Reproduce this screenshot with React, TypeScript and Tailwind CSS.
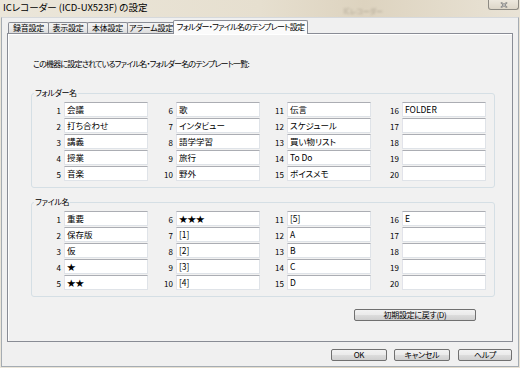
import React from 'react'

const font = "font-['Noto_Sans_CJK_JP',sans-serif] [font-feature-settings:'palt']"

const folderNames = ['会議', '打ち合わせ', '講義', '授業', '音楽', '歌', 'インタビュー', '語学学習', '旅行', '野外', '伝言', 'スケジュール', '買い物リスト', 'To Do', 'ボイスメモ', 'FOLDER', '', '', '', '']
const fileNames = ['重要', '保存版', '仮', '★', '★★', '★★★', '[1]', '[2]', '[3]', '[4]', '[5]', 'A', 'B', 'C', 'D', 'E', '', '', '', '']

// left margin of each of the 4 columns inside a group box
const colMargins = ['ml-[12px]', 'ml-[8px]', 'ml-[7px]', 'ml-[11px]']

function Field({ n, value }: { n: number; value: string }) {
  return (
    <div className="flex h-[15px] items-center">
      <span className="w-[20px] pr-[3px] pt-[2px] text-right text-[8px] leading-none text-black">{n}</span>
      <div className="h-[15px] w-[84px] border border-[#dfe3e8] border-t-[#abadb3] border-l-[#e2e3ea] bg-white pl-[2px] text-[8.5px] leading-[12px] text-black whitespace-nowrap overflow-hidden">
        {value}
      </div>
    </div>
  )
}

function Group({ label, items, className }: { label: string; items: string[]; className?: string }) {
  return (
    <fieldset className={`ml-[23px] w-[464px] rounded-[3px] border border-[#d5dfe5] pt-[3px] pb-[6px] ${className ?? ''}`}>
      <legend className="ml-[2px] px-[1px] text-[8px] leading-[12px] tracking-[-0.3px] text-black">{label}</legend>
      <div className="flex">
        {[0, 1, 2, 3].map(c => (
          <div key={c} className={`flex flex-col gap-[1px] ${colMargins[c]}`}>
            {items.slice(c * 5, c * 5 + 5).map((v, i) => (
              <Field key={i} n={c * 5 + i + 1} value={v} />
            ))}
          </div>
        ))}
      </div>
    </fieldset>
  )
}

function Btn({ children, className }: { children: React.ReactNode; className?: string }) {
  return (
    <div className={`flex h-[12px] items-center justify-center rounded-[2px] border border-[#707070] bg-[linear-gradient(#f2f2f2,#ebebeb_45%,#dddddd_50%,#cfcfcf)] text-[8px] leading-none tracking-[-0.3px] text-black ${className ?? ''}`}>
      {children}
    </div>
  )
}

const tabs = [
  { label: '録音設定', w: 'w-[41px]' },
  { label: '表示設定', w: 'w-[40px]' },
  { label: '本体設定', w: 'w-[41px]' },
  { label: 'アラーム設定', w: 'w-[48px]' },
]

export default function App() {
  return (
    <div className={`h-[368px] w-[520px] overflow-hidden bg-[linear-gradient(90deg,#ebe6da,#e6dfcf_50%,#ddd3bf_70%,#e9e3d6)] ${font}`}>
      {/* title bar */}
      <div className="flex h-[17px] items-start">
        <span className="ml-[3px] mt-[1px] text-[9.5px] leading-[12px] text-black">ICレコーダー (ICD-UX523F) の設定</span>
        <span className="ml-[196px] mt-[8px] text-[7px] leading-none text-[#8a8070] opacity-60 blur-[1px]">ICレコーダー</span>
        <div className="ml-auto mr-[1px] flex h-[10px] w-[31px] items-center justify-center rounded-b-[3px] border border-t-0 border-[#8d8a83] bg-[linear-gradient(#ede8de,#ddd6c8)]">
          <svg width="8" height="6" viewBox="0 0 8 6">
            <path d="M1 0.5 L7 5.5 M7 0.5 L1 5.5" stroke="#5a5a5a" strokeWidth="1.6" />
            <path d="M1 0.5 L7 5.5 M7 0.5 L1 5.5" stroke="#ffffff" strokeWidth="0.6" />
          </svg>
        </div>
      </div>

      {/* client area */}
      <div className="ml-[1px] flex h-[350px] w-[518px] flex-col border border-[#a5acb3] border-t-[#d6d9dc] bg-[#f0f0f0]">
        {/* tab strip */}
        <div className="ml-[5px] mt-[2px] flex h-[13px] items-end pl-[1px]">
          {tabs.map((t, i) => (
            <div
              key={t.label}
              className={`flex h-[11px] ${t.w} ${i > 0 ? '-ml-[1px]' : ''} items-center justify-center whitespace-nowrap rounded-t-[2px] border border-b-0 border-[#898c95] bg-[linear-gradient(#f3f3f3,#ebebeb_50%,#dcdcdc)] text-[8px] leading-none tracking-[-0.3px] text-black`}
            >
              {t.label}
            </div>
          ))}
          <div className="relative z-10 -mb-[1px] -ml-[2px] flex h-[14px] w-[135px] items-center justify-center whitespace-nowrap rounded-t-[2px] border border-b-0 border-[#898c95] bg-[#fbfbfb] pb-[1px] text-[8px] leading-none tracking-[-0.7px] text-black">
            フォルダー・ファイル名のテンプレート設定
          </div>
        </div>

        {/* tab page */}
        <div className="ml-[5px] flex h-[309px] w-[506px] flex-col border border-[#898c95] bg-[#f1f1f1] shadow-[inset_1px_1px_0_#ffffff]">
          <p className="ml-[25px] mt-[24px] whitespace-nowrap text-[8px] leading-[12px] tracking-[-0.8px] text-black">この機器に設定されているファイル名・フォルダー名のテンプレート一覧:</p>
          <Group label="フォルダー名" items={folderNames} className="mt-[17px]" />
          <Group label="ファイル名" items={fileNames} className="mt-[8px]" />
          <div className="mt-[12px] flex justify-end pr-[36px]">
            <Btn className="w-[122px]">初期設定に戻す(D)</Btn>
          </div>
        </div>

        {/* dialog buttons */}
        <div className="mt-[7px] flex justify-end pr-[6px]">
          <Btn className="w-[56px]">OK</Btn>
          <Btn className="ml-[7px] w-[56px]">キャンセル</Btn>
          <Btn className="ml-[8px] w-[54px]">ヘルプ</Btn>
        </div>
      </div>
    </div>
  )
}
